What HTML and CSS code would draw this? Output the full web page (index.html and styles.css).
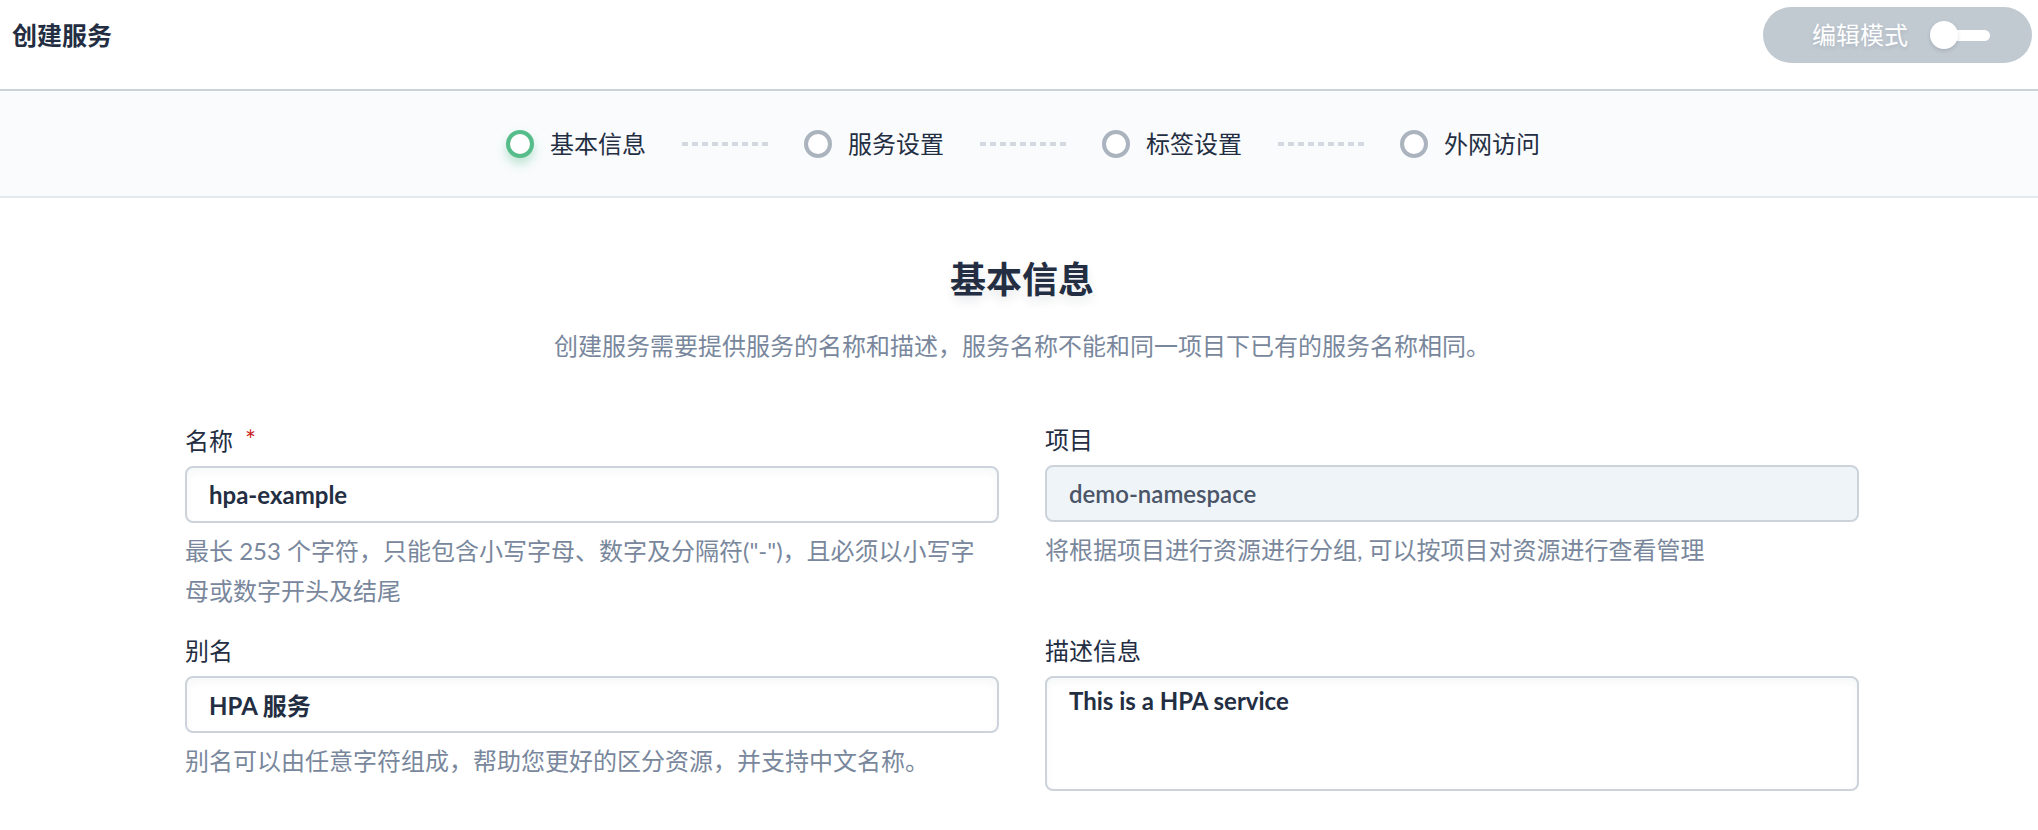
FILE: index.html
```html
<!DOCTYPE html>
<html lang="zh-CN">
<head>
<meta charset="utf-8">
<title>创建服务</title>
<link rel="stylesheet" href="styles.css">
</head>
<body>
<header class="topbar">
  <h1 class="title">创建服务</h1>
  <button class="mode-btn" type="button">
    <span class="mode-text">编辑模式</span>
    <span class="toggle"><span class="toggle-bar"></span><span class="toggle-knob"></span></span>
  </button>
</header>

<nav class="steps">
  <div class="step active"><span class="step-dot"></span><span class="step-label">基本信息</span></div>
  <span class="step-line"></span>
  <div class="step"><span class="step-dot"></span><span class="step-label">服务设置</span></div>
  <span class="step-line"></span>
  <div class="step"><span class="step-dot"></span><span class="step-label">标签设置</span></div>
  <span class="step-line"></span>
  <div class="step"><span class="step-dot"></span><span class="step-label">外网访问</span></div>
</nav>

<main class="main">
  <h2 class="section-title">基本信息</h2>
  <p class="section-desc">创建服务需要提供服务的名称和描述，服务名称不能和同一项目下已有的服务名称相同。</p>

  <form class="form">
    <div class="field">
      <label class="label">名称<span class="req">*</span></label>
      <div class="input">hpa-example</div>
      <p class="help wrap">最长 253 个字符，只能包含小写字母、数字及分隔符("-")，且必须以小写字母或数字开头及结尾</p>
    </div>
    <div class="field">
      <label class="label">项目</label>
      <div class="input disabled">demo-namespace</div>
      <p class="help">将根据项目进行资源进行分组, 可以按项目对资源进行查看管理</p>
    </div>
    <div class="field">
      <label class="label">别名</label>
      <div class="input">HPA 服务</div>
      <p class="help">别名可以由任意字符组成，帮助您更好的区分资源，并支持中文名称。</p>
    </div>
    <div class="field">
      <label class="label">描述信息</label>
      <div class="input textarea">This is a HPA service</div>
    </div>
  </form>
</main>
</body>
</html>
```
FILE: styles.css
```css
* { box-sizing: border-box; }

html, body {
  margin: 0;
  padding: 0;
  background: #ffffff;
}

body {
  font-family: "Lato", "Noto Sans CJK SC", sans-serif;
  color: #242e42;
  font-size: 24px;
  overflow: hidden;
}

/* ---------- top bar ---------- */
.topbar {
  display: flex;
  justify-content: space-between;
  align-items: flex-start;
  height: 91px;
  padding: 7px 6px 0 12px;
  border-bottom: 2px solid #cad2da;
  background: #fff;
}

.title {
  margin: 0;
  font-size: 25px;
  line-height: 56px;
  font-weight: 700;
  color: #242e42;
}

.mode-btn {
  display: flex;
  align-items: center;
  height: 56px;
  width: 269px;
  padding: 0 0 0 49px;
  border: none;
  border-radius: 28px;
  background: #c1c9d1;
  font-family: inherit;
  cursor: pointer;
}

.mode-text {
  font-size: 24px;
  line-height: 32px;
  color: #ffffff;
  text-shadow: 0 2px 4px rgba(36, 46, 66, 0.12);
}

.toggle {
  position: relative;
  display: block;
  width: 60px;
  height: 28px;
  margin-left: 22px;
}

.toggle-bar {
  position: absolute;
  left: 10px;
  top: 9px;
  width: 50px;
  height: 11px;
  border-radius: 6px;
  background: #ffffff;
}

.toggle-knob {
  position: absolute;
  left: 0;
  top: 0;
  width: 28px;
  height: 28px;
  border-radius: 50%;
  background: #ffffff;
  box-shadow: 0 2px 4px rgba(36, 46, 66, 0.15);
}

/* ---------- steps ---------- */
.steps {
  display: flex;
  justify-content: center;
  align-items: center;
  height: 107px;
  padding-left: 8px;
  background: #f9fbfd;
  border-bottom: 2px solid #e3e9ef;
}

.step {
  display: flex;
  align-items: center;
}

.step-dot {
  display: block;
  width: 28px;
  height: 28px;
  border-radius: 50%;
  border: 4px solid #abb4be;
  background: #ffffff;
}

.step.active .step-dot {
  border-color: #55bc8a;
  box-shadow: 0 6px 10px rgba(85, 188, 138, 0.35);
}

.step-label {
  margin-left: 16px;
  width: 96px;
  font-size: 24px;
  line-height: 32px;
  color: #242e42;
  white-space: nowrap;
}

.step-line {
  display: block;
  width: 86px;
  height: 4px;
  margin: 0 36px;
  background: repeating-linear-gradient(to right, #d3d9e0 0 6px, transparent 6px 10px);
}

/* ---------- main ---------- */
.main {
  padding-left: 6px;
}

.section-title {
  margin: 57px 0 0;
  text-align: center;
  font-size: 36px;
  line-height: 48px;
  font-weight: 700;
  color: #242e42;
  text-shadow: 0 6px 10px rgba(36, 46, 66, 0.1);
}

.section-desc {
  margin: 25px 0 0;
  text-align: center;
  font-size: 24px;
  line-height: 36px;
  color: #79879c;
}

.form {
  display: grid;
  grid-template-columns: 814px 814px;
  column-gap: 46px;
  row-gap: 22px;
  width: 1674px;
  margin: 58px auto 0;
}

.field {
  display: flex;
  flex-direction: column;
}

.label {
  font-size: 24px;
  line-height: 36px;
  color: #242e42;
  margin-bottom: 7px;
}

.req {
  margin-left: 12px;
  font-size: 26px;
  color: #ca2621;
}

.input {
  height: 57px;
  padding: 0 22px;
  border: 2px solid #ccd3db;
  border-radius: 8px;
  background: #ffffff;
  box-shadow: inset 0 4px 8px rgba(36, 46, 66, 0.04);
  display: flex;
  align-items: center;
  font-size: 24px;
  font-weight: 700;
  color: #242e42;
}

.input.disabled {
  background: #eff4f9;
  color: #4a5568;
  font-weight: 600;
  box-shadow: none;
}

.input.textarea {
  height: 115px;
  align-items: flex-start;
  padding-top: 7px;
  line-height: 32px;
}

.help {
  margin: 8px 0 0;
  font-size: 24px;
  line-height: 40px;
  color: #79879c;
}

.help.wrap {
  padding-right: 24px;
}
```
